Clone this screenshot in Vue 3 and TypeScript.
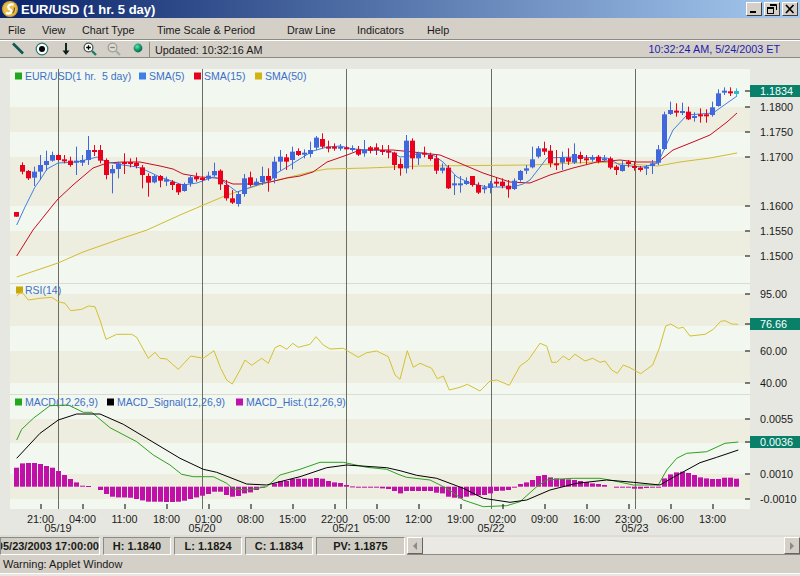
<script setup lang="ts">
type Candle = { x: number; color: string; top: number; bodyTop: number; bodyH: number; wickH: number };

const BLUE = "#4068dc";
const RED = "#e8001c";
const CYAN = "#2cb8d4";

// [color, wick top, body top, body bottom, wick bottom], read off the 3x crops
type Row = [string, number, number, number, number];

const r = RED;
const b = BLUE;

const rowsA: Row[] = [
  [r, 246, 246, 260, 260], [r, 97, 105, 125, 133], [r, 120, 123, 145, 150], [b, 110, 125, 143, 168],
  [b, 75, 105, 125, 150], [b, 62, 93, 105, 122], [b, 65, 75, 92, 95], [r, 72, 75, 90, 92],
  [r, 75, 88, 92, 100], [r, 80, 92, 105, 110], [b, 50, 92, 95, 135], [b, 75, 90, 98, 108],
  [b, 18, 60, 90, 105], [r, 45, 60, 65, 78], [r, 45, 60, 92, 100], [r, 85, 90, 135, 148],
  [b, 105, 117, 130, 190], [b, 95, 100, 117, 145], [r, 70, 96, 98, 132], [r, 85, 96, 100, 112],
  [r, 82, 98, 108, 115], [r, 105, 112, 135, 175], [r, 130, 138, 158, 200], [b, 135, 138, 157, 160],
  [r, 135, 138, 152, 172], [b, 140, 148, 155, 168], [r, 150, 155, 165, 180], [r, 160, 162, 187, 195],
  [b, 158, 162, 183, 185], [b, 135, 142, 160, 170], [r, 128, 140, 148, 155], [r, 138, 144, 150, 155],
  [b, 125, 137, 146, 152], [b, 98, 123, 136, 140], [r, 118, 122, 163, 180], [r, 150, 165, 205, 212],
  [r, 180, 205, 218, 222], [b, 185, 192, 222, 230], [b, 132, 145, 192, 200], [r, 125, 142, 165, 170],
  [b, 145, 155, 165, 168], [b, 110, 138, 156, 165], [r, 115, 138, 152, 185],
];

const rowsB: Row[] = [
  [b, 110, 125, 175, 190], [b, 90, 110, 125, 152], [r, 102, 112, 125, 150], [b, 80, 95, 120, 148],
  [r, 85, 93, 105, 108], [b, 88, 98, 102, 115], [b, 65, 90, 102, 112], [b, 48, 53, 83, 90],
  [r, 40, 57, 80, 85], [r, 62, 80, 85, 97], [r, 70, 80, 83, 92], [b, 72, 80, 82, 92],
  [r, 78, 82, 85, 88], [b, 76, 84, 88, 95], [r, 78, 88, 104, 108], [b, 60, 90, 100, 110],
  [r, 78, 82, 92, 100], [r, 70, 82, 90, 105], [r, 75, 90, 92, 105], [r, 75, 92, 98, 115],
  [r, 95, 98, 135, 150], [r, 115, 132, 145, 167], [b, 45, 62, 145, 160], [r, 55, 62, 115, 148],
  [b, 95, 100, 115, 135], [r, 80, 98, 102, 112], [r, 98, 105, 117, 122], [r, 105, 115, 152, 162],
  [b, 130, 143, 152, 160], [r, 135, 143, 205, 207], [b, 165, 190, 195, 225], [b, 168, 190, 195, 218],
  [b, 172, 183, 192, 195], [r, 168, 168, 195, 200], [r, 187, 195, 218, 222], [b, 195, 202, 208, 220],
  [b, 183, 190, 204, 220], [r, 172, 185, 190, 200], [r, 175, 185, 198, 205], [r, 180, 197, 208, 233],
  [b, 175, 182, 207, 210], [b, 150, 153, 180, 185], [b, 135, 145, 152, 162],
];

const rowsC: Row[] = [
  [b, 200, 238, 262, 265], [b, 198, 205, 230, 235], [r, 185, 205, 215, 225], [r, 195, 212, 250, 262],
  [r, 210, 250, 255, 270], [b, 215, 233, 248, 270], [r, 205, 233, 245, 255], [b, 190, 222, 248, 252],
  [r, 215, 225, 237, 250], [r, 225, 235, 240, 255], [b, 225, 233, 237, 245], [r, 225, 230, 245, 250],
  [b, 225, 235, 240, 245], [r, 230, 235, 263, 268], [r, 255, 260, 270, 285], [b, 240, 255, 273, 275],
  [r, 240, 245, 252, 262], [r, 245, 258, 262, 272], [r, 258, 263, 270, 275], [b, 255, 260, 265, 285],
  [b, 240, 250, 258, 282], [b, 195, 208, 248, 255], [b, 95, 103, 207, 210], [b, 65, 90, 102, 105],
  [r, 70, 92, 96, 110], [b, 68, 93, 96, 105], [r, 80, 95, 118, 120], [b, 97, 108, 112, 125],
  [r, 85, 103, 106, 128], [r, 88, 103, 106, 128], [b, 65, 82, 105, 110], [b, 28, 40, 78, 80],
  [b, 22, 32, 38, 45], [r, 22, 34, 38, 48], [CYAN, 25, 33, 42, 50],
];

function toCandles(rows: Row[], baseY: number, start: number): Candle[] {
  return rows.map(([color, wt, bt, bb, wb], i) => ({
    x: 14 + (start + i) * 6,
    color,
    top: baseY + wt / 3,
    bodyTop: baseY + bt / 3,
    bodyH: Math.max((bb - bt) / 3, 2),
    wickH: (wb - wt) / 3,
  }));
}

const candles = [...toCandles(rowsA, 130, 0), ...toCandles(rowsB, 120, 43), ...toCandles(rowsC, 80, 86)];

const sma5 =
  "16.7,225 25,207 35,187 40,180 47,169 58,163 77,162 97,157 107,162 123,165 137,167 143,169 160,177 183,185 197,183 213,177 220,179 237,192 257,185 270,181 277,173 287,167 303,157 313,151 327,147 340,146 353,149 370,150 390,151 400,157 410,156 420,153 433,155 443,162 457,177 470,183 487,187 513,187 523,184 530,180 547,158 573,157 607,158 620,165 643,167 658,163 673,130 687,115 713,113 737,96";
const sma15 =
  "16.7,256 33,230 53,205 58,199 73,185 93,168 107,163 123,162 140,162 160,166 173,169 183,174 200,177 217,178 233,184 257,184 270,182 287,178 300,176 313,172 327,162 347,155 360,150 393,150 413,152 440,155 457,162 483,173 510,182 530,183 550,175 573,168 597,162 620,160 637,162 658,162 673,150 693,142 710,135 727,122 737,113";
const sma50 =
  "16.7,277 58,263 83,252 120,239 147,230 180,215 227,195 253,187 270,182 310,172 327,169 367,168 420,166 530,165 597,162 658,166 680,162 710,158 737,153";

// crop coordinates -> page coordinates
const toPoints = (list: number[], x0: number, y0: number) => {
  const out: string[] = [];
  for (let i = 0; i < list.length; i += 2) {
    out.push(`${(x0 + list[i] / 3).toFixed(1)},${(y0 + list[i + 1] / 3).toFixed(1)}`);
  }
  return out.join(" ");
};

const rsi =
  toPoints(
    [50, 48, 65, 35, 85, 60, 120, 55, 155, 52, 175, 65, 195, 70, 212, 92, 245, 88, 265, 78, 285, 80, 300, 120, 318, 178, 350, 163, 395, 163, 410, 172, 445, 235, 465, 217, 480, 235, 500, 237, 535, 268, 572, 228, 610, 235, 642, 212, 662, 265, 680, 300, 697, 312, 720, 270, 735, 240, 755, 256, 785, 235, 805, 250, 825, 203, 840, 196, 860, 208, 878, 190, 895, 202, 930, 193, 948, 170, 970, 195, 990, 207, 1030, 205, 1075, 232, 1100, 218, 1130, 213, 1165, 230, 1185, 285, 1200, 298],
    0,
    280,
  ) +
  " " +
  toPoints(
    [22, 212, 40, 262, 60, 250, 95, 265, 112, 296, 130, 288, 148, 330, 180, 322, 202, 313, 240, 333, 270, 303, 290, 300, 328, 316, 360, 258, 385, 240, 420, 190, 440, 198, 455, 247, 470, 247, 490, 228, 507, 240, 525, 223, 555, 243, 578, 235, 600, 247, 615, 243, 635, 270, 652, 280, 670, 255, 690, 263, 722, 281, 758, 255, 778, 205, 797, 138, 812, 132, 835, 145, 850, 142, 870, 168, 915, 163, 940, 148, 962, 124, 975, 122, 995, 132, 1015, 133],
    400,
    280,
  );

const macd =
  toPoints(
    [50, 150, 65, 118, 100, 85, 150, 47, 205, 45, 250, 67, 275, 67, 330, 113, 410, 155, 460, 195, 510, 225, 545, 253, 580, 260, 640, 260, 680, 280, 700, 297, 740, 300, 800, 290, 840, 255, 900, 238, 960, 217, 1030, 217, 1100, 232, 1160, 238, 1200, 255],
    0,
    390,
  ) +
  " " +
  toPoints(
    [20, 262, 90, 270, 140, 295, 190, 330, 250, 350, 320, 347, 360, 335, 410, 290, 440, 270, 480, 267, 520, 265, 600, 265, 640, 272, 700, 285, 775, 285, 800, 240, 830, 205, 860, 190, 920, 185, 975, 160, 1015, 156],
    400,
    390,
  );

const macdSignal =
  toPoints(
    [50, 205, 120, 130, 175, 90, 230, 72, 300, 72, 370, 103, 440, 145, 540, 205, 610, 238, 650, 247, 740, 282, 800, 285, 900, 260, 980, 233, 1040, 225, 1160, 233, 1200, 242],
    0,
    390,
  ) +
  " " +
  toPoints(
    [50, 256, 110, 265, 190, 295, 250, 325, 330, 337, 380, 330, 450, 300, 530, 280, 620, 270, 700, 277, 780, 285, 820, 262, 900, 218, 950, 202, 1015, 180],
    400,
    390,
  );

// histogram heights in px above (+) or below (-) the zero line
const histValues = [
  19, 23.3, 23.7, 23.7, 22.7, 20.7, 19, 15.7, 11.7, 7.7, 4.3, 1, 0.7, 0,
  -3.3, -7.3, -10, -10.7, -10.7, -11, -12.3, -13.7, -15, -15, -15, -15.3, -15.3, -15, -14, -12.3, -10.7, -9, -7.3, -5, -5, -8.3, -10, -9.3, -6.7, -5.7, -3.3, -1, 0,
  3.3, 5.7, 5.7, 7.7, 8, 8, 8, 8.7, 8, 5.7, 4.3, 3.7, 1.7, 0.3,
  -0.3, -0.7, -0.7, -1, -1.7, -2.3, -4.3, -6.7, -4.3, -4.3, -4.3, -4.3, -4.3, -6, -6.7, -10, -11, -11.7, -10, -8.7, -8.7, -8.3, -6.7, -4.3, -4, -3.3, -0.7,
  2.7, 4.3, 6.7, 10.7, 11.7, 9.3, 8.3, 7.7, 7.3, 6.7, 5.7, 4.7, 3.3, 2.7, 1.7, 0,
  -0.7, -0.7, -1, -2, -2, -1.3, -0.7, -0.3,
  8.3, 12.3, 14.3, 15, 13.7, 11.7, 9.3, 8.3, 7.7, 7.7, 9, 9, 8,
];
const HIST_ZERO = 486.7;
const histBars = histValues
  .map((v, i) => ({ x: 14 + i * 6, y: v > 0 ? HIST_ZERO - v : HIST_ZERO, h: Math.abs(v), v }))
  .filter((bar) => bar.v !== 0);

const darkBands = [
  [107, 25], [157, 49], [231, 25], [294, 32], [351, 32], [419, 24], [474, 25],
];
const panelLines = [283, 394];
const dayLines = [58, 202, 346, 491, 635];

const legends = [
  { sq: 15, y: 76, color: "#22a81c", tx: 25, text: "EUR/USD(1 hr.  5 day)" },
  { sq: 139, y: 76, color: "#3c80e8", tx: 149, text: "SMA(5)" },
  { sq: 194, y: 76, color: "#e8001c", tx: 204, text: "SMA(15)" },
  { sq: 255, y: 76, color: "#d0b414", tx: 265, text: "SMA(50)" },
  { sq: 16, y: 290, color: "#c8a808", tx: 25, text: "RSI(14)" },
  { sq: 15, y: 402, color: "#22a81c", tx: 25, text: "MACD(12,26,9)" },
  { sq: 107, y: 402, color: "#000000", tx: 117, text: "MACD_Signal(12,26,9)" },
  { sq: 236, y: 402, color: "#c010b0", tx: 246, text: "MACD_Hist.(12,26,9)" },
];

const axisLabels = [
  { y: 107, text: "1.1800" }, { y: 132, text: "1.1750" }, { y: 157, text: "1.1700" },
  { y: 206, text: "1.1600" }, { y: 231, text: "1.1550" }, { y: 256, text: "1.1500" },
  { y: 294, text: "95.00" }, { y: 351, text: "60.00" }, { y: 383, text: "40.00" },
  { y: 419, text: "0.0055" }, { y: 474, text: "0.0010" }, { y: 499, text: "-0.0010" },
];
const badges = [
  { y: 91, text: "1.1834" }, { y: 324, text: "76.66" }, { y: 442, text: "0.0036" },
];

const hours = ["21:00", "04:00", "11:00", "18:00", "01:00", "08:00", "15:00", "22:00", "05:00", "12:00", "19:00", "02:00", "09:00", "16:00", "23:00", "06:00", "13:00"];
const timeTicks = hours.map((text, i) => ({ x: 40.5 + i * 42, text }));
const dates = [
  { x: 58, text: "05/19" }, { x: 202, text: "05/20" }, { x: 346, text: "05/21" }, { x: 491, text: "05/22" }, { x: 635, text: "05/23" },
];

const menus = ["File", "View", "Chart Type", "Time Scale & Period", "Draw Line", "Indicators", "Help"];
const quotes = ["H: 1.1840", "L: 1.1824", "C: 1.1834", "PV: 1.1875"];
</script>

<template>
  <div class="app">
    <header class="titlebar">
      <svg class="logo" width="16" height="16" viewBox="0 0 16 16">
        <circle cx="8" cy="8" r="8" fill="#d8a838" />
        <circle cx="8" cy="8" r="6.6" fill="#e8c050" />
        <path d="M11.5 3.6C8 2.6 5.4 4.6 6.6 7.2 7.4 9 10 8.4 9.4 10.6 8.8 12.6 6 12.8 3.8 12" fill="none" stroke="#fff" stroke-width="2.2" />
        <path d="M12.6 6.5C12.6 9 12 11 10.6 12.4" fill="none" stroke="#7a5a10" stroke-width="1.2" />
      </svg>
      <span class="title">EUR/USD  (1 hr.  5 day)</span>
      <div class="win-buttons">
        <button class="win-btn">
          <svg width="12" height="10" viewBox="0 0 12 10"><rect x="2" y="7" width="6" height="2" fill="#000" /></svg>
        </button>
        <button class="win-btn">
          <svg width="12" height="10" viewBox="0 0 12 10">
            <path d="M4 0.5h6.5v5.5M4 1.5h6.5" fill="none" stroke="#000" />
            <rect x="1.5" y="3.5" width="6" height="6" fill="#d4d0c8" stroke="#000" />
            <path d="M1.5 4.5h6" stroke="#000" />
          </svg>
        </button>
        <button class="win-btn">
          <svg width="12" height="10" viewBox="0 0 12 10"><path d="M2 1l7.5 8M9.5 1L2 9" stroke="#000" stroke-width="1.7" /></svg>
        </button>
      </div>
    </header>

    <nav class="menubar">
      <span v-for="m in menus" :key="m">{{ m }}</span>
    </nav>

    <div class="toolbar">
      <div class="tools">
        <svg width="16" height="16" viewBox="0 0 16 16"><path d="M3 2.5l10 10" stroke="#0e5a50" stroke-width="2.6" /></svg>
        <svg width="16" height="16" viewBox="0 0 16 16">
          <circle cx="8" cy="8" r="5.8" fill="#fff" stroke="#2c7a6c" stroke-width="1.2" />
          <circle cx="8" cy="8" r="3" fill="#000" />
        </svg>
        <svg width="16" height="16" viewBox="0 0 16 16">
          <path d="M8 2v9" stroke="#102820" stroke-width="2" />
          <path d="M4.5 9.5h7L8 14z" fill="#0c1c18" />
        </svg>
        <svg width="16" height="16" viewBox="0 0 16 16">
          <circle cx="6.5" cy="6.5" r="4.4" fill="#fff" stroke="#405850" stroke-width="1.3" />
          <path d="M4.2 6.5h4.6M6.5 4.2v4.6" stroke="#000" stroke-width="1.3" />
          <path d="M10 10l4 4" stroke="#1c8068" stroke-width="2.4" />
        </svg>
        <svg width="16" height="16" viewBox="0 0 16 16">
          <circle cx="6.5" cy="6.5" r="4.4" fill="#dcdad2" stroke="#9c9c94" stroke-width="1.2" />
          <path d="M4.2 6.5h4.6" stroke="#808078" stroke-width="1.3" />
          <path d="M10 10l4 4" stroke="#9cb0a8" stroke-width="2.2" />
        </svg>
        <svg width="16" height="16" viewBox="0 0 16 16">
          <defs>
            <radialGradient id="ball" cx="0.4" cy="0.35" r="0.7">
              <stop offset="0" stop-color="#70e0b0" />
              <stop offset="0.55" stop-color="#109868" />
              <stop offset="1" stop-color="#086048" />
            </radialGradient>
          </defs>
          <circle cx="8" cy="7" r="4.4" fill="url(#ball)" />
        </svg>
      </div>
      <span class="updated">Updated: 10:32:16 AM</span>
      <span class="clock">10:32:24 AM, 5/24/2003 ET</span>
    </div>

    <svg class="chart" width="800" height="477" viewBox="0 58 800 477">
      <rect x="10" y="69" width="740" height="440" fill="#f2f7f0" />
      <rect v-for="band in darkBands" :key="band[0]" x="10" :y="band[0]" width="740" :height="band[1]" fill="#eeeee0" />
      <rect v-for="y in panelLines" :key="y" x="10" :y="y" width="740" height="1" fill="#d8dcd4" />

      <g v-for="item in legends" :key="item.text">
        <rect :x="item.sq" :y="item.y - 3.5" width="7" height="7" :fill="item.color" />
        <text class="legend" :x="item.tx" :y="item.y + 4">{{ item.text }}</text>
      </g>

      <rect v-for="x in dayLines" :key="x" :x="x" y="69" width="1" height="440" fill="#6c6c66" />

      <rect v-for="bar in histBars" :key="bar.x" :x="bar.x" :y="bar.y" width="5" :height="Math.max(bar.h, 1)" fill="#c010a8" />

      <polyline :points="sma50" class="line" stroke="#d0bc30" />
      <polyline :points="sma15" class="line" stroke="#c80c20" />
      <polyline :points="sma5" class="line" stroke="#4080e0" />
      <polyline :points="rsi" class="line" stroke="#d4c030" />
      <polyline :points="macd" class="line" stroke="#30a020" />
      <polyline :points="macdSignal" class="line" stroke="#000" />

      <g v-for="c in candles" :key="c.x">
        <rect :x="c.x + 2" :y="c.top" width="1" :height="c.wickH" :fill="c.color" />
        <rect :x="c.x" :y="c.bodyTop" width="5" :height="c.bodyH" :fill="c.color" />
      </g>

      <g v-for="a in axisLabels" :key="a.text">
        <rect x="745" :y="a.y - 0.5" width="5" height="1" fill="#000" />
        <text class="axis" x="760" :y="a.y + 4">{{ a.text }}</text>
      </g>
      <g v-for="a in badges" :key="a.text">
        <rect x="745" :y="a.y - 0.5" width="5" height="1" fill="#000" />
        <rect x="750" :y="a.y - 6" width="50" height="12" fill="#08806a" />
        <text class="axis badge" x="760" :y="a.y + 4">{{ a.text }}</text>
      </g>

      <g v-for="t in timeTicks" :key="t.text">
        <rect :x="t.x" y="504" width="1" height="5" fill="#000" />
        <text class="axis mid" :x="t.x" y="523">{{ t.text }}</text>
      </g>
      <text v-for="d in dates" :key="d.text" class="axis mid" :x="d.x" y="532">{{ d.text }}</text>
    </svg>

    <div class="statusbar">
      <div class="cell stamp"><span>05/23/2003 17:00:00</span></div>
      <div v-for="q in quotes" :key="q" class="cell" :class="{ wide: q.startsWith('PV') }">{{ q }}</div>
      <div class="scroll">
        <button class="arrow"><i class="tri left"></i></button>
        <div class="track"></div>
        <button class="arrow"><i class="tri right"></i></button>
      </div>
    </div>

    <footer class="warning">Warning: Applet Window</footer>
  </div>
</template>

<style scoped>
.app {
  width: 800px;
  height: 576px;
  overflow: hidden;
  display: flex;
  flex-direction: column;
  background: #e7e7e1;
  font-family: "Liberation Sans", Arial, sans-serif;
  font-size: 10.8px;
  color: #1a1a1a;
}

.titlebar {
  height: 18px;
  flex: none;
  display: flex;
  align-items: center;
  padding: 0 2px;
  gap: 3px;
  background: linear-gradient(90deg, #0a246a, #a6caf0);
}

.title {
  color: #fff;
  font-size: 13px;
  font-weight: 700;
  white-space: pre;
}

.win-buttons {
  margin-left: auto;
  display: flex;
  gap: 2px;
}

.win-btn {
  width: 16px;
  height: 14px;
  padding: 0;
  display: flex;
  align-items: center;
  justify-content: center;
  background: #d4d0c8;
  border: 1px solid;
  border-color: #fff #404040 #404040 #fff;
}

.menubar {
  height: 18px;
  padding-top: 3px;
  flex: none;
  display: grid;
  grid-template-columns: 34px 40px 75px 130px 70px 70px auto;
  align-items: center;
  padding-left: 8px;
  background: #d4d0c8;
  border-bottom: 1px solid #8c8a84;
  box-shadow: 0 1px 0 #fff;
}

.toolbar {
  height: 16px;
  margin-top: 1px;
  flex: none;
  display: flex;
  align-items: center;
  background: #d4d0c8;
  border-bottom: 1px solid #8c8a84;
}

.tools {
  display: flex;
  gap: 8px;
  padding-left: 10px;
  padding-right: 3px;
  height: 15px;
  align-items: center;
  border-right: 1px solid #8c8a84;
}

.updated {
  margin-left: 5px;
  padding-top: 2px;
}

.clock {
  margin-left: auto;
  margin-right: 20px;
  color: #1c1cb0;
}

.chart {
  display: block;
  flex: none;
}

.line {
  fill: none;
  stroke-width: 1;
}

.legend {
  font-size: 10.5px;
  fill: #3c70c8;
  white-space: pre;
}

.axis {
  font-size: 10.8px;
  fill: #1a1a1a;
}

.axis.mid {
  text-anchor: middle;
}

.axis.badge {
  fill: #fff;
}

.statusbar {
  height: 20px;
  flex: none;
  display: flex;
  gap: 3px;
  padding-top: 2px;
  box-sizing: border-box;
  background: #dedcd4;
}

.cell {
  width: 68px;
  flex: none;
  box-sizing: border-box;
  display: flex;
  align-items: center;
  justify-content: center;
  background: #d0cec4;
  border: 1px solid;
  border-color: #8c8a84 #fff #fff #8c8a84;
  font-weight: 700;
  font-size: 11px;
}

.cell.stamp {
  width: 100px;
  overflow: hidden;
  justify-content: flex-end;
  white-space: nowrap;
}

.cell.wide {
  width: 89px;
}

.scroll {
  flex: 1;
  display: flex;
  margin-left: -1px;
  border-bottom: 1px solid #8c8a84;
}

.arrow {
  width: 16px;
  padding: 0;
  display: flex;
  align-items: center;
  justify-content: center;
  background: #d4d0c8;
  border: 1px solid;
  border-color: #fff #66645e #66645e #fff;
}

.track {
  flex: 1;
  background: #ebe9e3;
}

.tri {
  width: 0;
  height: 0;
  border-top: 4px solid transparent;
  border-bottom: 4px solid transparent;
}

.tri.left {
  border-right: 4px solid #8c8a84;
}

.tri.right {
  border-left: 4px solid #8c8a84;
}

.warning {
  height: 18px;
  flex: none;
  padding-left: 3px;
  line-height: 19px;
  font-size: 11px;
  background: #d4d0c8;
  border-bottom: 1px solid #fff;
}
</style>
